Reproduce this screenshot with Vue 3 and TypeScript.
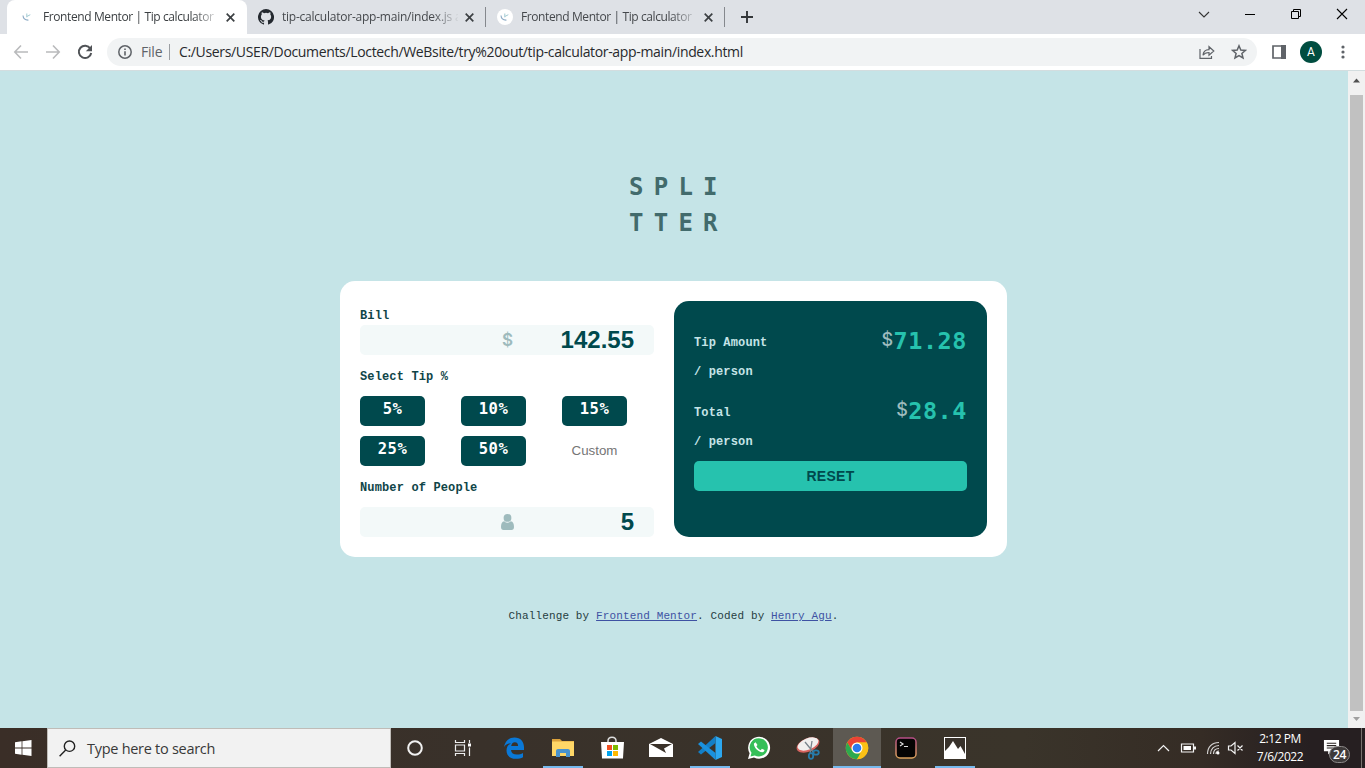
<script setup lang="ts">
import { ref } from 'vue'

const bill = ref('142.55')
const people = ref('5')
const tips: string[] = ['5%', '10%', '15%', '25%', '50%']
const results = [
  { label: 'Tip Amount', value: '71.28' },
  { label: 'Total', value: '28.4' },
]
const tabs = [
  { title: 'Frontend Mentor | Tip calculator', icon: 'fm', active: true },
  { title: 'tip-calculator-app-main/index.js a', icon: 'gh', active: false },
  { title: 'Frontend Mentor | Tip calculator', icon: 'fm', active: false },
]
const apps = [
  { name: 'edge', state: '' },
  { name: 'files', state: 'open' },
  { name: 'store', state: '' },
  { name: 'mail', state: '' },
  { name: 'code', state: 'open' },
  { name: 'whatsapp', state: '' },
  { name: 'snip', state: '' },
  { name: 'chrome', state: 'current' },
  { name: 'terminal', state: '' },
  { name: 'photos', state: 'open' },
]
</script>

<template>
  <div class="screen">
    <header class="tabstrip">
      <div v-for="(t, i) in tabs" :key="i" class="tab" :class="[t.icon, { active: t.active }]">
        <svg v-if="t.icon === 'fm'" class="fav" width="16" height="16" viewBox="0 0 16 16">
          <circle v-if="!t.active" cx="8" cy="8" r="8" fill="#fff" />
          <path d="M4 6.500c.2 3.200 2.200 4.700 5.400 4.600" fill="none" stroke="#8aa9c4" stroke-width="1.100" />
          <path d="M7.800 4.500v3.800M7.800 7.500l3.500-1.800" fill="none" stroke="#a3cbd3" stroke-width="1" />
        </svg>
        <svg v-else class="fav" width="16" height="16" viewBox="0 0 16 16">
          <path fill="#24292f" d="M8 0a8 8 0 0 0-2.530 15.590c.4.070.55-.17.55-.38v-1.490c-2.010.37-2.530-.49-2.690-.94-.09-.23-.48-.94-.82-1.130-.28-.15-.68-.52-.01-.53.63-.01 1.080.58 1.230.82.72 1.210 1.870.87 2.330.66.07-.52.28-.87.51-1.070-1.780-.2-3.640-.89-3.640-3.950 0-.87.31-1.590.82-2.150-.08-.2-.36-1.020.08-2.120 0 0 .67-.21 2.200.82a7.400 7.400 0 0 1 4 0c1.530-1.040 2.200-.82 2.200-.82.44 1.100.16 1.920.08 2.120.51.56.82 1.270.82 2.150 0 3.070-1.870 3.750-3.650 3.950.29.25.54.73.54 1.480v2.200c0 .21.15.46.55.38A8 8 0 0 0 8 0z" />
        </svg>
        <span class="tab-title">{{ t.title }}</span>
        <svg class="close" width="9" height="9" viewBox="0 0 9 9"><path d="M.7.7l7.600 7.600M8.300.7L.7 8.300" stroke="#3c4043" stroke-width="1.700" /></svg>
      </div>
      <svg class="plus" width="12" height="12" viewBox="0 0 12 12"><path d="M6 0v12M0 6h12" stroke="#333639" stroke-width="1.900" /></svg>
      <div class="winctl">
        <svg width="46" height="34" viewBox="0 0 46 34"><path d="M18 12l5 5 5-5" fill="none" stroke="#333" stroke-width="1.100" /></svg>
        <svg width="46" height="34" viewBox="0 0 46 34"><path d="M18 14.500h10" stroke="#000" /></svg>
        <svg width="46" height="34" viewBox="0 0 46 34"><path d="M18.500 11.500h7v7h-7zM20.500 11v-1.500h7v7H26" fill="none" stroke="#000" /></svg>
        <svg width="46" height="34" viewBox="0 0 46 34"><path d="M18 9l10 10M28 9l-10 10" stroke="#000" stroke-width="1.100" /></svg>
      </div>
    </header>

    <nav class="toolbar">
      <svg class="navs" width="107" height="35" viewBox="0 0 107 35">
        <g fill="none" stroke-width="1.600">
          <path d="M28 18H15M21 11.500L14.800 18l6.200 6.500" stroke="#b9babc" />
          <path d="M46 18h13M53 11.500l6.200 6.500-6.200 6.500" stroke="#b9babc" />
          <path d="M90.300 14.500A6.200 6.200 0 1 0 91.200 19" stroke="#505357" stroke-width="2" />
        </g>
        <path d="M92 11v6.200h-6.200z" fill="#505357" />
      </svg>
      <div class="omnibox">
        <svg class="info" width="14" height="14" viewBox="0 0 14 14"><circle cx="7" cy="7" r="6.200" fill="none" stroke="#5f6368" stroke-width="1.500" /><path d="M7 6.200v4.300M7 3.400v1.500" stroke="#5f6368" stroke-width="1.600" /></svg>
        <span class="scheme">File</span>
        <span class="bar"></span>
        <span class="url">C:/Users/USER/Documents/Loctech/WeBsite/try%20out/tip-calculator-app-main/index.html</span>
        <svg class="share" width="16" height="16" viewBox="0 0 16 16" fill="none" stroke="#5f6368" stroke-width="1.200"><path d="M1 5v9.400h11.500V12M4 11.300c.3-4 2.400-5.600 6-5.700V2.700L14.800 7 10 11.200V8.500c-3 0-4.600.6-6 2.800z" /></svg>
        <svg class="star" width="16" height="16" viewBox="0 0 16 16"><path d="M8 1.800l1.800 4.200 4.600.4-3.500 3 1.100 4.500L8 11.500l-4 2.400 1.100-4.500-3.500-3 4.600-.4z" fill="none" stroke="#5f6368" stroke-width="1.500" /></svg>
      </div>
      <svg class="panel" width="14" height="14" viewBox="0 0 14 14"><path d="M1 1h12v12H1z" fill="#fff" stroke="#5f6368" stroke-width="1.700" /><path d="M9 0h5v14H9z" fill="#5f6368" /></svg>
      <span class="avatar">A</span>
      <svg class="dots" width="4" height="14" viewBox="0 0 4 14" fill="#5f6368"><circle cx="2" cy="2" r="1.600" /><circle cx="2" cy="7" r="1.600" /><circle cx="2" cy="12" r="1.600" /></svg>
    </nav>

    <div class="viewport">
      <main class="page">
        <h1 class="logo">SPLI<br />TTER</h1>
        <section class="card">
          <div class="form">
            <label class="label bill-label">Bill</label>
            <div class="field">
              <span class="dollar">$</span>
              <span class="amount">{{ bill }}</span>
            </div>
            <label class="label tip-label">Select Tip %</label>
            <div class="tips">
              <button v-for="t in tips" :key="t" class="tip">{{ t }}</button>
              <span class="custom">Custom</span>
            </div>
            <label class="label people-label">Number of People</label>
            <div class="field">
              <svg class="person" width="13" height="16" viewBox="0 0 13 16" fill="#9ebbbd"><circle cx="6.500" cy="3.900" r="3.900" /><path d="M3.200 7.200a4.800 4.800 0 0 0 6.600 0C12 7.600 13 9.700 13 13c0 1.900-.9 3-2.500 3h-8C.9 16 0 14.900 0 13c0-3.300 1-5.400 3.200-5.800z" /></svg>
              <span class="amount">{{ people }}</span>
            </div>
          </div>
          <div class="summary">
            <div v-for="r in results" :key="r.label" class="result">
              <div class="caption">{{ r.label }}<br />/ person</div>
              <div class="figure"><span class="sign">$</span><b>{{ r.value }}</b></div>
            </div>
            <button class="reset">RESET</button>
          </div>
        </section>
        <footer class="credit">Challenge by <a>Frontend Mentor</a>. Coded by <a>Henry Agu</a>.</footer>
      </main>
      <aside class="scroll">
        <svg width="17" height="20" viewBox="0 0 17 20"><path d="M5 11.500l3.500-4 3.500 4z" fill="#505050" /></svg>
        <i class="thumb"></i>
        <svg width="17" height="17" viewBox="0 0 17 17"><path d="M5 6l3.500 4L12 6z" fill="#a0a0a0" /></svg>
      </aside>
    </div>

    <div class="taskbar">
      <div class="start"><svg width="17" height="16" viewBox="0 0 17 16" fill="#fff"><path d="M0 2.200l6.600-.9v6.200H0zM7.400 1.200L16.500 0v7.500H7.400zM0 8.400h6.600v6.300L0 13.800zM7.400 8.400h9.100V16l-9.100-1.200z" /></svg></div>
      <div class="search">
        <svg width="17" height="17" viewBox="0 0 17 17" fill="none" stroke="#222" stroke-width="1.400"><circle cx="10.500" cy="6.200" r="5.200" /><path d="M6.700 10L.6 16.200" /></svg>
        <span>Type here to search</span>
      </div>
      <div class="cell"><svg width="18" height="18" viewBox="0 0 18 18"><circle cx="9" cy="9" r="6.800" fill="none" stroke="#f1f1f1" stroke-width="2" /></svg></div>
      <div class="cell"><svg width="18" height="16" viewBox="0 0 18 16" fill="none" stroke="#eee" stroke-width="1.200"><path d="M1.500 0v2.500h9V0M1.500 5h9v6h-9zM1.500 16v-2.500h9V16M15.500 0v3M15.500 7.500V16" /><path d="M14 3.500h3v3h-3z" fill="#fff" stroke="none" /></svg></div>
      <div class="apps">
        <div v-for="a in apps" :key="a.name" class="app" :class="a.state">
          <svg width="24" height="24" viewBox="0 0 24 24">
            <g v-if="a.name === 'edge'"><path d="M2 11C3 5 7 1.500 12.500 1.500c6 0 9.500 4.200 9.500 9.800V14H9c.2 3 2.500 4.500 6 4.500 2.300 0 4.200-.5 6-1.500v4.300c-2 1-4.300 1.500-7 1.500-6 0-9.500-3.400-9.500-8.300 0-3.300 1.700-5.700 4.500-7.300C5.800 7.500 3.500 8.800 2 11zm7.200-.9h6.900c0-2.400-1-3.900-3.200-3.900-2.100 0-3.300 1.500-3.700 3.900z" fill="#0a78d7" /></g>
            <g v-else-if="a.name === 'files'"><path d="M1 3h8l2 2h12v4H1z" fill="#dca23b" /><path d="M1 5.500h22V20H1z" fill="#ffd767" /><path d="M5 21v-6c0-1.100.9-2 2-2h10c1.100 0 2 .9 2 2v6h-4v-4H9v4z" fill="#4993cd" /></g>
            <g v-else-if="a.name === 'store'"><path d="M8 7V5c0-5 8-5 8 0v2" fill="none" stroke="#ddd" stroke-width="1.500" /><path d="M1 6h23l-1 16.500H2z" fill="#fff" /><path d="M7 9h5v5H7z" fill="#f25022" /><path d="M13 9h5v5h-5z" fill="#7fba00" /><path d="M7 15h5v5H7z" fill="#00a4ef" /><path d="M13 15h5v5h-5z" fill="#ffb900" /></g>
            <g v-else-if="a.name === 'mail'"><path d="M0 8l12-6 12 6v13H0z" fill="#fff" /><path d="M1 8h22l-8 4.500 2 4.500z" fill="#3a3129" /></g>
            <g v-else-if="a.name === 'code'"><path d="M17.500 0L24 3v18l-6.500 3z" fill="#2ca7ef" /><path d="M17.500 0v7L3 18.500 0 16z" fill="#137fc7" /><path d="M17.500 24v-7L3 5.500 0 8z" fill="#1b91dd" /></g>
            <g v-else-if="a.name === 'whatsapp'"><path d="M1 23l1.600-5.700A11 11 0 1 1 7 21.500z" fill="#fff" /><path d="M3.500 20.500l1-3.700a9.100 9.100 0 1 1 3.300 2.700z" fill="#35bf58" /><path d="M8.600 6.200L7 7.500c-.8 2.500 3.400 8.300 8.300 8.800 1.300-.1 2.200-1 2.200-2.200l-2.600-1.300-1.300 1.400c-2-.8-3.300-2.100-4.200-3.900L10.500 9z" fill="#fff" /></g>
            <g v-else-if="a.name === 'snip'"><ellipse cx="12" cy="9" rx="12" ry="6.700" transform="rotate(-22 12 9)" fill="#d7635f" /><ellipse cx="12" cy="8" rx="11" ry="5.600" transform="rotate(-22 12 8)" fill="#f1efee" /><path d="M9 6l9 11M16 5l-2 13" stroke="#79838b" stroke-width="1.300" /><g fill="none" stroke="#267cab" stroke-width="1.800"><ellipse cx="20" cy="16.500" rx="2.800" ry="2.200" /><ellipse cx="15" cy="20" rx="2.200" ry="2.900" /></g></g>
            <g v-else-if="a.name === 'chrome'"><circle cx="12" cy="12" r="11.200" fill="#fbc116" /><path d="M2.300 6.400A11.200 11.200 0 0 1 21.700 6.400H12a5.600 5.600 0 0 0-4.900 8.400z" fill="#ea4335" /><path d="M2.300 6.400l4.900 8.400A5.600 5.600 0 0 0 12 17.600h4.800L12 23.200A11.200 11.200 0 0 1 2.300 6.400z" fill="#2da94f" /><path d="M12 6.400h9.700A11.200 11.200 0 0 1 12 23.200l4.800-8.400z" fill="#fbc116" /><circle cx="12" cy="12" r="5.500" fill="#fff" /><circle cx="12" cy="12" r="4.300" fill="#2b7bee" /></g>
            <g v-else-if="a.name === 'terminal'"><defs><linearGradient id="rim" x2="0" y2="1"><stop stop-color="#b44d85" /><stop offset="1" stop-color="#dda35c" /></linearGradient></defs><rect x="2" y="2" width="20" height="20" rx="4" fill="#050404" stroke="url(#rim)" stroke-width="1.500" /><path d="M6 6l3 2-3 2M10 10.500h4" fill="none" stroke="#ddd" stroke-width="1.200" /></g>
            <g v-else><path d="M1 1h22v22H1z" fill="#fff" /><path d="M2 2h20v16l-4.500-8-2.500 3-5-8-4 6-4 4z" fill="#38322b" /></g>
          </svg>
        </div>
      </div>
      <div class="tray">
        <svg width="90" height="20" viewBox="0 0 90 20" fill="none" stroke="#f3f3f3" stroke-width="1.200">
          <path d="M1 13l5.500-5.500L12 13" />
          <path d="M24.500 6h12v8h-12z" /><path d="M26.500 8h7.500v4h-7.500z" fill="#fff" stroke="none" /><path d="M38 8.500v3" stroke-width="2" />
          <path d="M50.500 16C50.500 9 55 4.500 62 4.500M53.500 16c0-5 3.500-8.500 8.500-8.500M56.500 16c0-3.300 2.200-5.500 5.500-5.500M59 16c0-1.800 1.200-3 3-3" opacity=".85" /><circle cx="61" cy="15" r="1.500" fill="#fff" stroke="none" />
          <path d="M71.500 8h2.500l4-3.500v11L74 12h-2.500zM80.500 7.500l5 5M85.500 7.500l-5 5" />
        </svg>
        <div class="clock"><span>2:12 PM</span><span>7/6/2022</span></div>
        <div class="notice">
          <svg width="17" height="17" viewBox="0 0 18 18"><path d="M1 1h16v12H9l-3.500 3.500V13H1z" fill="#fff" /><path d="M4 4.500h10M4 7h10M4 9.500h7" stroke="#2b2523" stroke-width="1.100" /></svg>
          <span class="badge">24</span>
        </div>
        <i class="peek"></i>
      </div>
    </div>
  </div>
</template>

<style>
html, body { overflow: hidden; }
</style>

<style scoped>
* { box-sizing: border-box; }
.screen { width: 1365px; height: 768px; display: flex; flex-direction: column; font-family: "Open Sans", "Noto Sans", sans-serif; overflow: hidden; background: #fff; }
svg { display: block; flex: none; }
.tabstrip { height: 34px; flex: none; background: #dee1e6; display: flex; align-items: center; padding-left: 7px; }
.tab { height: 34px; width: 239px; display: flex; align-items: center; padding-left: 11px; color: #45484c; flex: none; }
.tab:not(.active)::after { content: ""; height: 20px; width: 1px; background: #85888d; margin-left: 11px; }
.tab.active { background: #fff; border-radius: 8px 8px 0 0; width: 240px; padding-left: 12px; color: #3c4043; }
.tab-title { width: 176px; margin-left: 8px; margin-right: 7px; font-size: 12px; letter-spacing: -.4px; line-height: 20px; white-space: nowrap; -webkit-mask-image: linear-gradient(90deg, #000 150px, transparent 178px); mask-image: linear-gradient(90deg, #000 150px, transparent 178px); }
.gh .tab-title { letter-spacing: -.23px; }
.plus { margin-left: 16px; }
.winctl { display: flex; margin-left: auto; }
.toolbar { height: 37px; flex: none; display: flex; align-items: center; background: #fff; border-bottom: 1px solid #d3dddf; padding-bottom: 1px; }
.omnibox { width: 1150px; height: 28px; border-radius: 14px; background: #f1f3f4; display: flex; align-items: center; padding: 0 10px 0 11px; font-size: 14px; line-height: 20px; white-space: nowrap; }
.scheme { color: #5f6368; margin-left: 9px; width: 21px; letter-spacing: -.2px; }
.bar { width: 1px; height: 16px; background: #9b9ea2; margin: 0 9px 0 7px; }
.url { color: #27292c; letter-spacing: -.34px; }
.share { margin-left: auto; margin-right: 16px; }
.panel { margin-left: 15px; }
.avatar { width: 22px; height: 22px; border-radius: 50%; background: #004d40; color: #fff; font: 12px/22px Roboto, sans-serif; text-align: center; margin-left: 14px; }
.dots { margin-left: 19px; }

.viewport { height: 657px; flex: none; display: flex; }
.page { width: 1348px; background: #c5e4e7; display: flex; flex-direction: column; align-items: center; }
.logo { margin: 98px 0 58px 10px; width: 100px; font: bold 24px/36px "DejaVu Sans Mono", monospace; letter-spacing: 10.250px; color: #426b6c; white-space: nowrap; height: 54px; }
.card { width: 667px; height: 276px; margin-right: 1px; background: #fff; border-radius: 15px; padding: 20px; display: flex; gap: 20px; }
.form { width: 294px; display: flex; flex-direction: column; }
.label { font: bold 12px/20px "Liberation Mono", monospace; letter-spacing: .140px; color: #0f4548; white-space: nowrap; }
.bill-label { padding-top: 5px; margin-bottom: -1px; }
.tip-label { margin: 12px 0 9px; }
.people-label { margin: 12px 0 9px; }
.field { height: 30px; flex: none; border-radius: 5px; background: #f3f9f9; display: flex; align-items: center; justify-content: flex-end; padding-right: 20px; }
.amount { width: 120px; text-align: right; font: bold 24px/30px "Liberation Sans", sans-serif; color: #00494d; }
.dollar { width: 13px; font: 600 17px/30px Inter, sans-serif; color: #9ebbbd; text-align: center; }
.tips { display: grid; grid-template-columns: 65px 65px 65px; column-gap: 36px; row-gap: 10px; }
.tip { height: 30px; border: 0; border-radius: 5px; background: #00494d; color: #fff; padding: 0 0 4px; font: bold 15.500px/26px "DejaVu Sans Mono", monospace; letter-spacing: .450px; }
.custom { font: 13.330px/30px "Liberation Sans", sans-serif; color: #757575; text-align: center; }
.summary { width: 313px; border-radius: 15px; background: #00494d; padding: 20px; }
.result { height: 70px; display: flex; justify-content: space-between; }
.caption { font: bold 12px/29px "Liberation Mono", monospace; letter-spacing: .140px; color: #c5e4e7; padding-top: 8px; }
.figure { display: flex; height: 38px; padding-top: 1px; font: bold 23.500px/38px "DejaVu Sans Mono", monospace; color: #26c2ae; letter-spacing: .540px; }
.sign { width: 12px; font: 500 18px/36px Inter, sans-serif; letter-spacing: 0; color: #9ebbbd; }
.reset { display: block; width: 273px; height: 30px; border: 0; border-radius: 5px; background: #26c2ae; color: #00494d; font: bold 14px/30px "Liberation Sans", sans-serif; letter-spacing: .3px; padding: 0; }
.credit { margin-top: 49px; margin-right: 1px; font: 11px/20px "Liberation Mono", monospace; letter-spacing: .130px; color: #263d3f; white-space: nowrap; }
.credit a { color: #3e52a3; text-decoration: underline; }
.scroll { width: 17px; background: #f1f1f1; display: flex; flex-direction: column; align-items: center; }
.thumb { width: 13px; height: 616px; background: #c1c1c1; margin-top: 4px; }

.taskbar { height: 40px; flex: none; display: flex; background: linear-gradient(90deg, #3a2e27, #39312a 35%, #3a342a 75%, #352c25 88%, #261f21 96%); }
.start { width: 47px; display: flex; align-items: center; justify-content: center; }
.search { width: 344px; background: #f2f2f2; border: 1px solid #bfbcb8; display: flex; align-items: center; padding-left: 11px; font-size: 14.500px; letter-spacing: -.28px; color: #393939; }
.search span { margin-left: 11px; }
.cell { width: 48px; display: flex; align-items: center; justify-content: center; }
.apps { display: flex; margin-left: 2px; }
.app { width: 49px; display: flex; align-items: center; justify-content: center; }
.app.open { background: linear-gradient(#76b9ed, #76b9ed) 50% 100% / 40px 2px no-repeat; }
.app.current { width: 48px; margin-left: 1px; background: #5d5952; border-bottom: 2px solid #76b9ed; padding-top: 2px; }
.tray { margin-left: auto; display: flex; align-items: center; color: #fff; }
.clock { width: 66px; height: 36px; display: flex; flex-direction: column; align-items: center; font-size: 12px; line-height: 18px; letter-spacing: -.45px; }
.notice { position: relative; width: 44px; height: 40px; padding: 11px 0 0 10px; margin-right: 4px; }
.badge { position: absolute; left: 16px; top: 18px; width: 21px; height: 17px; border: 1px solid #8c8989; border-radius: 8.500px; background: #3e3a3a; font-size: 12px; line-height: 15px; font-weight: 600; text-align: center; letter-spacing: -.3px; }
.peek { width: 4px; height: 40px; border-left: 1px solid #77716d; }
</style>
